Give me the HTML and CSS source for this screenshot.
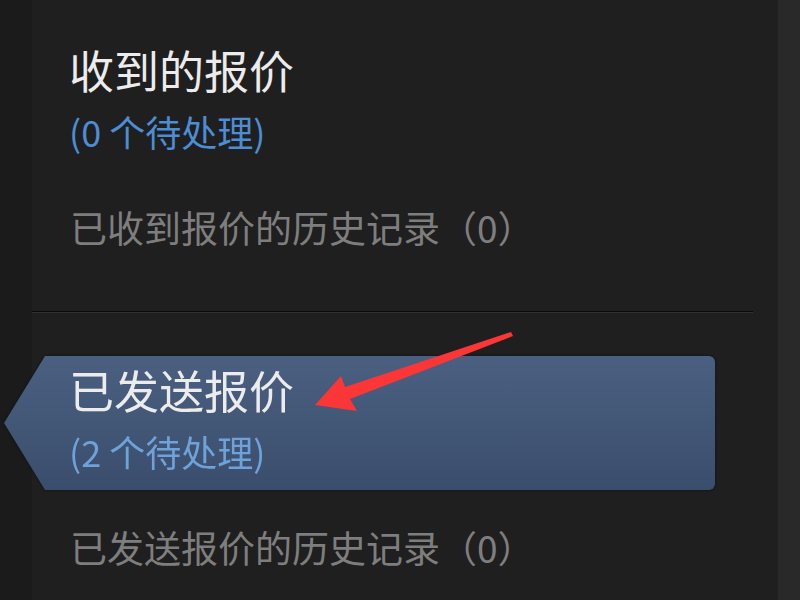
FILE: index.html
```html
<!DOCTYPE html>
<html lang="zh-CN">
<head>
    <meta charset="UTF-8">
    <meta name="viewport" content="width=device-width, initial-scale=1.0">
    <title>报价</title>
    <link rel="stylesheet" href="styles.css">
</head>
<body>

    <div class="gutter"></div>

    <div class="panel">
        <div class="section">
            <div class="item-wrap">
                <div class="item">
                    <div class="item-title">收到的报价</div>
                    <div class="item-count">(0 个待处理)</div>
                </div>
            </div>
            <div class="history">已收到报价的历史记录（0）</div>
        </div>

        <div class="divider"></div>

        <div class="section">
            <div class="item-wrap">
                <div class="item active">
                    <div class="item-title">已发送报价</div>
                    <div class="item-count">(2 个待处理)</div>
                </div>
            </div>
            <div class="history">已发送报价的历史记录（0）</div>
        </div>
    </div>

    <div class="scroll"></div>

    <!-- annotation arrow -->
    <svg class="arrow" width="800" height="600" viewBox="0 0 800 600">
        <polygon points="315,405 341,376 345,387 511,332 513,336 350,399 357,411" fill="#fb3636"/>
    </svg>

</body>
</html>
```

FILE: styles.css
```css
body {
    font-family: "Noto Sans CJK SC", "Noto Sans", sans-serif;
    display: flex;
    margin: 0;
    padding: 0;
    height: 100vh;
    overflow: hidden;
    background-color: #1b1b1b;
    position: relative;
}
.gutter {
    width: 32px;
    flex: none;
    background-color: #1b1b1b;
}
.panel {
    flex: 1;
    background-color: #1f1f1f;
}
.scroll {
    width: 22px;
    flex: none;
    background-color: #292929;
}
.section {
    padding-top: 36px;
}
.item-wrap {
    margin-left: -28px;
    width: 711px;
}
.item {
    height: 134px;
    box-sizing: border-box;
    padding: 7px 0 0 65px;
}
.item.active {
    background: linear-gradient(#4b6081, #3a4d6c);
    border-radius: 0 6px 6px 0;
    clip-path: polygon(41px 0, 100% 0, 100% 100%, 41px 100%, 0 50%);
}
.item-wrap:has(.active) {
    filter: drop-shadow(0 0 1.5px #0c1016);
}
.item-title {
    font-size: 45px;
    line-height: 54px;
    color: #ececec;
}
.item-count {
    font-size: 36px;
    line-height: 42px;
    margin-top: 13px;
    color: #4c8dd4;
}
.active .item-count {
    color: #6ea2d9;
}
.history {
    margin-top: 35px;
    padding-left: 38px;
    font-size: 37px;
    line-height: 44px;
    color: #7e7e7e;
    white-space: nowrap;
}
.divider {
    height: 1px;
    margin: 62px 25px 7px 0;
    background-color: #0a0a0a;
    border-bottom: 1px solid #313131;
}
.arrow {
    position: absolute;
    left: 0;
    top: 0;
    pointer-events: none;
}
```
